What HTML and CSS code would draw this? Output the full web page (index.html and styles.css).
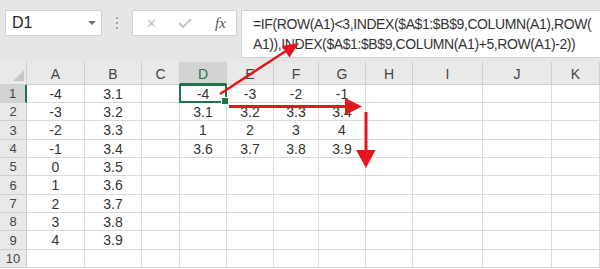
FILE: index.html
```html
<!DOCTYPE html>
<html lang="en">
<head>
    <meta charset="UTF-8">
    <meta name="viewport" content="width=device-width, initial-scale=1.0">
    <title>INDEX formula</title>
    <link rel="stylesheet" href="styles.css">
</head>
<body>
    <div class="toolbar">
        <div class="name-box">
            <span>D1</span>
            <span class="caret"></span>
        </div>
        <div class="grip"><i></i><i></i><i></i></div>
        <div class="actions">
            <span class="act cancel">&#x2715;</span>
            <svg class="act check" width="14" height="10" viewBox="0 0 14 10"><path d="M1 5 L5 9 L13 1" fill="none" stroke="#c4c4c4" stroke-width="2"/></svg>
            <span class="act fx">fx</span>
        </div>
        <div class="formula">=IF(ROW(A1)&lt;3,INDEX($A$1:$B$9,COLUMN(A1),ROW(<br>A1)),INDEX($A$1:$B$9,COLUMN(A1)+5,ROW(A1)-2))</div>
    </div>

    <div class="sheet">
        <div class="corner"><span></span></div>
        <div class="col">A</div>
        <div class="col">B</div>
        <div class="col">C</div>
        <div class="col active">D</div>
        <div class="col">E</div>
        <div class="col">F</div>
        <div class="col">G</div>
        <div class="col">H</div>
        <div class="col">I</div>
        <div class="col">J</div>
        <div class="col">K</div>
    </div>

    <svg class="arrows" width="600" height="269" viewBox="0 0 600 269">
        <g fill="#e8131b" stroke="#e8131b">
            <line x1="220" y1="94" x2="289" y2="49" stroke-width="2.5"/>
            <polygon points="299,43 289.4,57.6 281.8,45.9" stroke="none"/>
            <line x1="229" y1="106.5" x2="348" y2="106.5" stroke-width="3"/>
            <polygon points="345,98 362,106.5 345,115" stroke="none"/>
            <line x1="366" y1="112" x2="366" y2="152" stroke-width="3"/>
            <polygon points="356,150 375.5,150 366,168" stroke="none"/>
        </g>
    </svg>

    <script>
        const sheet = document.querySelector('.sheet');
        const colA = [-4, -3, -2, -1, 0, 1, 2, 3, 4];
        const colB = [3.1, 3.2, 3.3, 3.4, 3.5, 3.6, 3.7, 3.8, 3.9];

        // D1:G4 as the formula returns it
        function lookup(r, c) {
            if (r < 3) return r === 1 ? colA[c - 1] : colB[c - 1];
            return r === 3 ? colA[c + 4] : colB[c + 4];
        }

        for (let r = 1; r <= 10; r++) {
            const head = document.createElement('div');
            head.className = 'row' + (r === 1 ? ' active' : '');
            head.textContent = r;
            sheet.appendChild(head);

            for (let c = 0; c < 11; c++) {
                const cell = document.createElement('div');
                cell.className = 'cell';
                if (r <= 9 && c === 0) cell.textContent = colA[r - 1];
                if (r <= 9 && c === 1) cell.textContent = colB[r - 1];
                if (r <= 4 && c >= 3 && c <= 6) cell.textContent = lookup(r, c - 2);
                if (r === 1 && c === 3) cell.classList.add('selected');
                sheet.appendChild(cell);
            }
        }
    </script>
</body>
</html>
```

FILE: styles.css
```css
* {
    margin: 0;
    padding: 0;
    box-sizing: border-box;
}

body {
    width: 600px;
    height: 269px;
    overflow: hidden;
    background: #fff;
    font-family: "Liberation Sans", Arial, sans-serif;
    color: #333;
    position: relative;
}

.toolbar {
    height: 62px;
    background: #e6e6e6;
    display: flex;
    align-items: flex-start;
    padding: 10px 0 0 5px;
}

.name-box {
    flex-shrink: 0;
    width: 97px;
    height: 26px;
    background: #fff;
    border: 1px solid #d2d2d2;
    display: flex;
    align-items: center;
    justify-content: space-between;
    padding: 0 5px 0 6px;
    font-size: 16px;
    color: #222;
}

.caret {
    width: 0;
    height: 0;
    border-left: 4px solid transparent;
    border-right: 4px solid transparent;
    border-top: 4px solid #777;
}

.grip {
    flex-shrink: 0;
    width: 30px;
    height: 26px;
    display: flex;
    flex-direction: column;
    align-items: center;
    justify-content: center;
    gap: 3px;
}

.grip i {
    width: 2px;
    height: 2px;
    background: #a6a6a6;
}

.actions {
    flex-shrink: 0;
    width: 105px;
    height: 26px;
    background: #fff;
    border: 1px solid #d2d2d2;
    display: flex;
    align-items: center;
    padding: 0 0 0 13px;
    gap: 21px;
}

.cancel {
    font-size: 13px;
    color: #c4c4c4;
}

.fx {
    font-family: "Liberation Serif", "Times New Roman", serif;
    font-style: italic;
    font-size: 15px;
    color: #555;
    margin-left: 2px;
}

.formula {
    margin-left: 4px;
    flex: 1;
    min-width: 0;
    overflow: hidden;
    height: 48px;
    background: #fff;
    border: 1px solid #d2d2d2;
    border-right: none;
    padding: 3px 0 0 11px;
    font-size: 14px;
    letter-spacing: -0.4px;
    line-height: 20px;
    white-space: nowrap;
    color: #333;
}

.sheet {
    display: grid;
    grid-template-columns: 27px 58px 57px 38px 47px 47px 45px 47px 47px 70px 69px 1fr;
    grid-template-rows: 23px 18px 18px 19px 18px 18px 19px 18px 18px 19px 18px;
    font-size: 14px;
}

.corner,
.col,
.row {
    background: #e9e9e9;
    border-right: 1px solid #cfcfcf;
    border-bottom: 1px solid #cfcfcf;
    color: #444;
    display: flex;
    align-items: center;
    justify-content: center;
}

.corner {
    align-items: flex-end;
    justify-content: flex-end;
    padding: 0 2px 3px 0;
}

.corner span {
    width: 0;
    height: 0;
    border-left: 11px solid transparent;
    border-bottom: 11px solid #c6c6c6;
}

.col {
    padding-top: 2px;
}

.row {
    font-size: 13px;
}

.col.active {
    background: #d3d3d3;
    color: #217346;
    border-bottom: 2px solid #217346;
}

.row.active {
    background: #d3d3d3;
    border-right: 2px solid #217346;
}

.cell {
    border-right: 1px solid #dadada;
    border-bottom: 1px solid #dadada;
    display: flex;
    align-items: center;
    justify-content: center;
    color: #333;
}

.cell.selected {
    border: 2px solid #217346;
    margin: -1px 0 0 -1px;
    position: relative;
}

.cell.selected::after {
    content: "";
    position: absolute;
    right: -4px;
    bottom: -4px;
    width: 6px;
    height: 6px;
    background: #217346;
    border: 1px solid #fff;
}

.arrows {
    position: absolute;
    left: 0;
    top: 0;
    pointer-events: none;
}
```
